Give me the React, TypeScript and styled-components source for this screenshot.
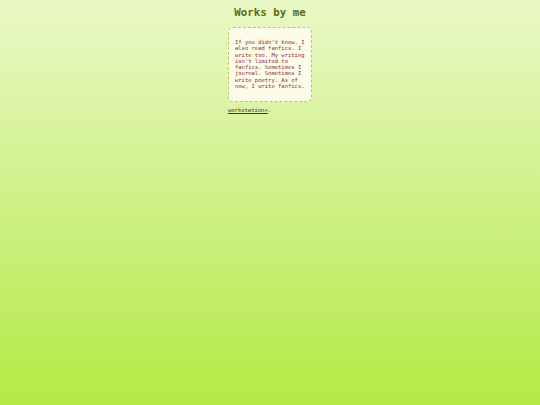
import React from 'react';
import styled, { createGlobalStyle } from 'styled-components';

const GlobalStyle = createGlobalStyle`
    html, body {
        margin: 0;
        padding: 0;
        height: 100%;
    }

    body {
        background: linear-gradient(to bottom, #eaf8c6 0%, #c9ef7a 60%, #b3ea44 100%);
        font-family: 'DejaVu Sans Mono', monospace;
    }

    #root {
        min-height: 100vh;
    }
`;

const Page = styled.main`
    display: flex;
    flex-direction: column;
    align-items: center;
    padding-top: 6px;
`;

const Title = styled.h1`
    margin: 0 0 7px;
    font-size: 10.8px;
    line-height: 14px;
    font-weight: bold;
    color: #5b6c10;
`;

const Column = styled.section`
    width: 84px;
    display: flex;
    flex-direction: column;
    gap: 5px;
`;

const Card = styled.div`
    box-sizing: border-box;
    width: 84px;
    padding: 11px 5px 12px 6px;
    background: #fdfce9;
    border: 1px dashed #a9d34c;
    border-radius: 5px;
    color: #8b2d36;
    font-size: 5.5px;
    line-height: 6.3px;
`;

const Footer = styled.p`
    margin: 0;
    font-size: 5.5px;
    line-height: 7px;
    color: #4a3a1a;
`;

const Link = styled.a`
    color: #4a3510;
    text-decoration: underline;
`;

export default function App() {
    return (
        <>
            <GlobalStyle />
            <Page>
                <Title>Works by me</Title>
                <Column>
                    <Card>
                        If you didn't know, I also read fanfics. I write too. My writing isn't limited to fanfics.
                        Sometimes I journal. Sometimes I write poetry. As of now, I write fanfics.
                    </Card>
                    <Footer>
                        <Link href="#">workstation»</Link>.
                    </Footer>
                </Column>
            </Page>
        </>
    );
}
